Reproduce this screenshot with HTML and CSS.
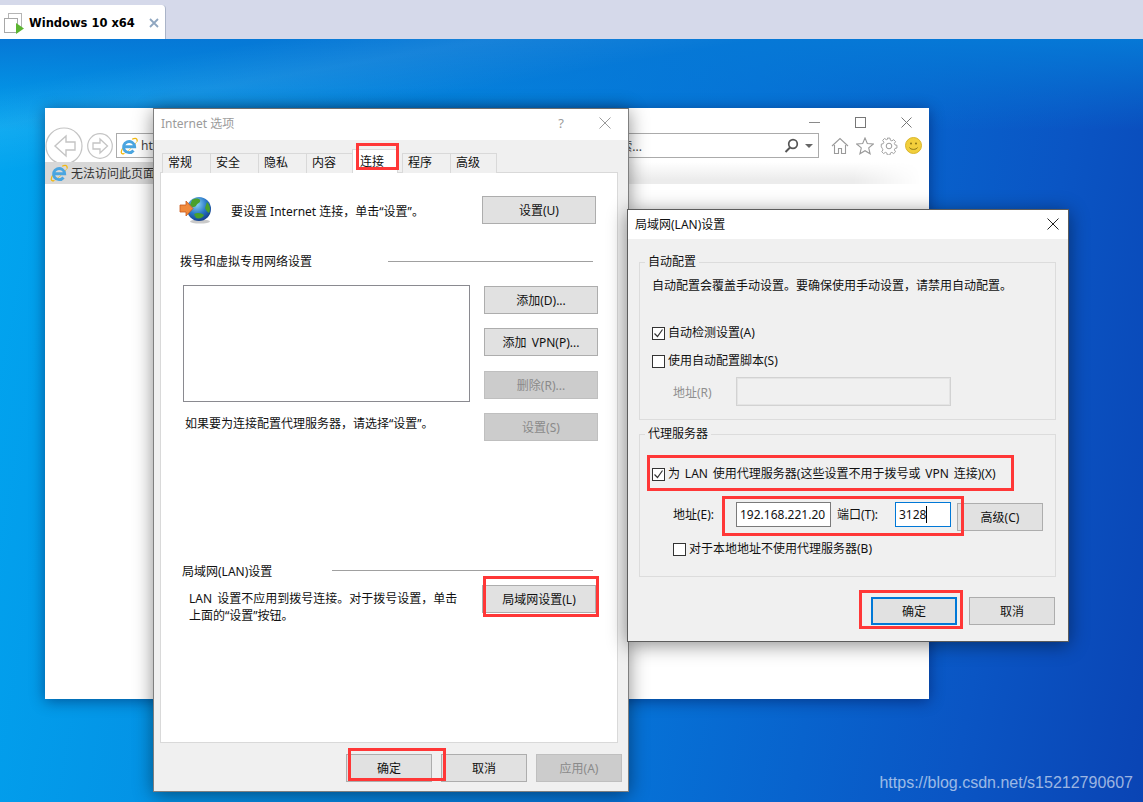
FILE: index.html
```html
<!DOCTYPE html>
<html lang="zh-CN">
<head>
    <meta charset="UTF-8">
    <title>Windows 10 x64</title>
    <link rel="stylesheet" href="styles.css">
</head>
<body>

    <svg class="defs" width="0" height="0">
        <defs>
            <symbol id="ie" viewBox="0 0 20 20">
                <path d="M3 12.500C.5 16.500 1 19.500 4.500 18.500M13.500 2.500c4-1.800 6-.8 5.500 2.500" fill="none" stroke="#f2b90f" stroke-width="1.400"/>
                <path d="M4.500 18.500C9 16 15.500 10 19 5" fill="none" stroke="#f2b90f" stroke-width=".7"/>
                <path d="M4.800 10.800h11.500A6.200 6.200 0 1 0 15 15" fill="none" stroke="#4aa5e0" stroke-width="3.200"/>
            </symbol>
            <radialGradient id="globeFill" cx="40%" cy="30%" r="75%">
                <stop offset="0" stop-color="#8fd6f5"/>
                <stop offset=".55" stop-color="#2a78c8"/>
                <stop offset="1" stop-color="#123a86"/>
            </radialGradient>
        </defs>
    </svg>

    <!-- Вкладка виртуальной машины -->
    <div class="tabstrip">
        <div class="vm-tab">
            <svg class="vm-icon" width="20" height="21" viewBox="0 0 20 21">
                <rect x="4.500" y=".5" width="13" height="14" fill="#fff" stroke="#b5b5b5"/>
                <rect x=".5" y="5.500" width="13" height="14" fill="#fff" stroke="#a8a8a8"/>
                <path d="M12 10l8 5.500-8 5.500z" fill="#5cb531"/>
            </svg>
            <span class="vm-name">Windows 10 x64</span>
            <svg class="vm-close" width="10" height="10" viewBox="0 0 10 10">
                <path d="M1 1l8 8M9 1l-8 8" stroke="#8fa6c0" stroke-width="1.800"/>
            </svg>
        </div>
    </div>

    <main class="desktop">

        <!-- Окно браузера -->
        <section class="ie-window">
            <div class="ie-caption">
                <svg width="11" height="11" viewBox="0 0 11 11"><path d="M0 5.500h11" stroke="#8a8a8a"/></svg>
                <svg width="11" height="11" viewBox="0 0 11 11"><rect x=".5" y=".5" width="10" height="10" fill="none" stroke="#777"/></svg>
                <svg width="11" height="11" viewBox="0 0 11 11"><path d="M.5.500l10 10M10.500.500l-10 10" stroke="#777"/></svg>
            </div>
            <div class="ie-toolbar">
                <svg class="ie-back" width="38" height="38" viewBox="0 0 38 38">
                    <circle cx="19" cy="19" r="18" fill="#fff" stroke="#c4c4c4" stroke-width="1.200"/>
                    <path d="M21 9L10 19l11 10v-6h9v-8h-9z" fill="#fff" stroke="#c4c4c4" stroke-width="1.400"/>
                </svg>
                <svg class="ie-forward" width="26" height="26" viewBox="0 0 26 26">
                    <circle cx="13" cy="13" r="12.300" fill="#fff" stroke="#c4c4c4" stroke-width="1.200"/>
                    <path d="M13 6l7.500 7-7.500 7v-4H6v-6h7z" fill="#fff" stroke="#c4c4c4" stroke-width="1.300"/>
                </svg>
                <div class="ie-address">
                    <svg class="ie-logo" width="18" height="18"><use href="#ie"/></svg>
                    <span class="ie-url">http://www.baidu.com/</span>
                    <span class="ie-search-text">搜索...</span>
                    <svg class="ie-lens" width="15" height="15" viewBox="0 0 15 15">
                        <circle cx="9" cy="6" r="4.300" fill="none" stroke="#555" stroke-width="1.700"/>
                        <path d="M6 9.500L1.500 14" stroke="#555" stroke-width="2"/>
                    </svg>
                    <span class="ie-drop"></span>
                </div>
                <div class="ie-tools">
                    <svg width="18" height="18" viewBox="0 0 18 18">
                        <path d="M1 9l8-7.500L17 9M3.500 8v8.500h4v-5h3v5h4V8" fill="none" stroke="#9a9a9a" stroke-width="1.100"/>
                    </svg>
                    <svg width="18" height="18" viewBox="0 0 18 18">
                        <path d="M9 1l2.300 5.500 6 .5-4.600 3.900 1.400 5.900L9 13.700l-5.100 3.100 1.400-5.900L.700 7l6-.5z" fill="#fff" stroke="#9a9a9a" stroke-width="1.100"/>
                    </svg>
                    <svg width="18" height="18" viewBox="0 0 18 18">
                        <circle cx="9" cy="9" r="2.800" fill="none" stroke="#9a9a9a"/>
                        <path d="M7.500 1h3l.4 2.300 1.600.7 2-1.300 2 2.100-1.300 2 .7 1.600 2.100.4v3l-2.100.4-.7 1.600 1.300 2-2 2-2-1.300-1.600.7-.4 2.100h-3l-.4-2.100-1.600-.7-2 1.300-2-2 1.300-2-.7-1.600L1 10.500v-3l2.100-.4.700-1.600-1.300-2 2-2.100 2 1.300 1.600-.7z" fill="none" stroke="#9a9a9a" transform="scale(.92) translate(.4 .2)"/>
                    </svg>
                    <svg width="17" height="17" viewBox="0 0 17 17">
                        <circle cx="8.500" cy="8.500" r="8" fill="#f2cf3c" stroke="#d9b52b"/>
                        <circle cx="6" cy="6.500" r="1" fill="#8a7414"/>
                        <circle cx="11" cy="6.500" r="1" fill="#8a7414"/>
                        <path d="M4.500 10.500c1 2.500 7 2.500 8 0" fill="none" stroke="#8a7414"/>
                    </svg>
                </div>
            </div>
            <div class="ie-tabrow">
                <div class="ie-tab">
                    <svg width="18" height="18"><use href="#ie"/></svg>
                    <span>无法访问此页面</span>
                </div>
                <div class="ie-tabfade"></div>
            </div>
        </section>

        <!-- Диалог свойств браузера -->
        <section class="dialog options">
            <header class="dialog-title faded">
                <span>Internet 选项</span>
                <div class="title-actions">
                    <span class="help">?</span>
                    <svg width="12" height="12" viewBox="0 0 12 12"><path d="M.5.500l11 11M11.500.500l-11 11" stroke="#9a9a9a"/></svg>
                </div>
            </header>
            <nav class="tabs">
                <span class="tab">常规</span>
                <span class="tab">安全</span>
                <span class="tab">隐私</span>
                <span class="tab">内容</span>
                <span class="tab active">连接</span>
                <span class="tab">程序</span>
                <span class="tab">高级</span>
            </nav>
            <div class="panel">
                <div class="setup-row">
                    <svg class="globe" width="33" height="28" viewBox="0 0 33 28">
                        <ellipse cx="21" cy="25.500" rx="10" ry="2" fill="#c9c9c9"/>
                        <circle cx="20" cy="13" r="12" fill="url(#globeFill)"/>
                        <path d="M13 4c3-2 7-2 8 0 1 3-3 3-4 6-2 2-5 1-6-1zM28 6c3 3 4 8 2 11-2-1-3-3-4-5zM15 18c3-2 8-1 10 1-1 3-5 4-8 3z" fill="#4aa02c"/>
                        <path d="M1 9h6V5l7 7.500L7 20v-4H1z" fill="#f08a3c" stroke="#c9591a" stroke-width=".8"/>
                    </svg>
                    <span class="setup-text">要设置 Internet 连接，单击“设置”。</span>
                    <button class="btn wide">设置(U)</button>
                </div>

                <div class="section-head vpn-head">
                    <span class="vpn-title">拨号和虚拟专用网络设置</span>
                    <i class="rule"></i>
                </div>
                <div class="vpn-area">
                    <div class="vpn-left">
                        <div class="listbox"></div>
                        <p class="vpn-note">如果要为连接配置代理服务器，请选择“设置”。</p>
                    </div>
                    <div class="vpn-buttons">
                        <button class="btn wide">添加(D)...</button>
                        <button class="btn wide">添加 VPN(P)...</button>
                        <button class="btn wide off">删除(R)...</button>
                        <button class="btn wide off">设置(S)</button>
                    </div>
                </div>

                <div class="section-head lan-head">
                    <span class="lan-title">局域网(LAN)设置</span>
                    <i class="rule"></i>
                </div>
                <div class="lan-row">
                    <p class="lan-note">LAN 设置不应用到拨号连接。对于拨号设置，单击<br>上面的“设置”按钮。</p>
                    <button class="btn wide">局域网设置(L)</button>
                </div>
            </div>
            <footer class="dialog-buttons">
                <button class="btn">确定</button>
                <button class="btn">取消</button>
                <button class="btn off">应用(A)</button>
            </footer>
        </section>

        <!-- Диалог настроек LAN -->
        <section class="dialog lan">
            <header class="dialog-title">
                <span>局域网(LAN)设置</span>
                <svg width="12" height="12" viewBox="0 0 12 12"><path d="M.5.500l11 11M11.500.500l-11 11" stroke="#222"/></svg>
            </header>
            <div class="lan-body">
                <fieldset class="group auto-group">
                    <legend>自动配置</legend>
                    <p class="auto-note">自动配置会覆盖手动设置。要确保使用手动设置，请禁用自动配置。</p>
                    <label class="check-row first-check">
                        <span class="check">
                            <svg width="11" height="11" viewBox="0 0 11 11"><path d="M1.500 5.500l3 3 5-7" fill="none" stroke="#333" stroke-width="1.200"/></svg>
                        </span>
                        自动检测设置(A)
                    </label>
                    <label class="check-row second-check"><span class="check"></span>使用自动配置脚本(S)</label>
                    <div class="field-row script-row">
                        <span class="field-label muted">地址(R)</span>
                        <div class="field disabled"></div>
                    </div>
                </fieldset>
                <fieldset class="group proxy-group">
                    <legend>代理服务器</legend>
                    <label class="check-row proxy-check">
                        <span class="check">
                            <svg width="11" height="11" viewBox="0 0 11 11"><path d="M1.500 5.500l3 3 5-7" fill="none" stroke="#333" stroke-width="1.200"/></svg>
                        </span>
                        为 LAN 使用代理服务器(这些设置不用于拨号或 VPN 连接)(X)
                    </label>
                    <div class="field-row proxy-row">
                        <span class="field-label">地址(E):</span>
                        <div class="field addr">192.168.221.20</div>
                        <span class="port-label">端口(T):</span>
                        <div class="field port">3128<i class="caret"></i></div>
                        <button class="btn adv">高级(C)</button>
                    </div>
                    <label class="check-row local-check"><span class="check"></span>对于本地地址不使用代理服务器(B)</label>
                </fieldset>
                <div class="lan-buttons">
                    <button class="btn default">确定</button>
                    <button class="btn">取消</button>
                </div>
            </div>
        </section>

        <!-- Красные рамки поверх окон -->
        <i class="mark mark-tab"></i>
        <i class="mark mark-lanbtn"></i>
        <i class="mark mark-ok"></i>
        <i class="mark mark-proxy"></i>
        <i class="mark mark-addr"></i>
        <i class="mark mark-lanok"></i>

        <span class="watermark">https://blog.csdn.net/s15212790607</span>
    </main>

</body>
</html>
```

FILE: styles.css
```css
* {
    box-sizing: border-box;
}

body {
    margin: 0;
    width: 1143px;
    height: 802px;
    overflow: hidden;
    font-family: "Noto Sans", "Noto Sans CJK SC", sans-serif;
    font-size: 12px;
    color: #111;
}

p {
    margin: 0;
}

.defs {
    position: absolute;
}

/* Верхняя полоса с вкладкой */
.tabstrip {
    height: 39px;
    background-color: #d5d9ea;
    padding-top: 5px;
}

.vm-tab {
    width: 166px;
    height: 34px;
    background-color: #fff;
    border-top-right-radius: 4px;
    border-right: 1px solid #aab4c8;
    display: flex;
    align-items: center;
    padding-left: 4px;
}

.vm-icon {
    flex: none;
    margin-top: 2px;
}

.vm-name {
    font-family: "DejaVu Sans", sans-serif;
    font-weight: bold;
    font-size: 11.500px;
    color: #000;
    margin: 2px 0 0 5px;
    white-space: nowrap;
}

.vm-close {
    margin: 1px 0 0 14px;
    flex: none;
}

/* Рабочий стол */
.desktop {
    position: relative;
    height: 763px;
    overflow: hidden;
    background:
        linear-gradient(170deg, rgba(255, 255, 255, 0) 5%, rgba(255, 255, 255, 0.07) 9%, rgba(255, 255, 255, 0) 14%),
        linear-gradient(180deg, #0678d6 0, rgba(6, 120, 214, 0) 12%),
        linear-gradient(100deg, #01a6f0 0, #0490e4 25%, #0671d6 60%, #0a55c4 85%, #0a44b4 100%);
}

.ie-window {
    position: absolute;
    left: 45px;
    top: 69px;
    width: 884px;
    height: 591px;
    background-color: #fff;
    box-shadow: 0 2px 14px rgba(0, 0, 50, 0.45);
}

.ie-caption {
    height: 24px;
    display: flex;
    justify-content: flex-end;
    align-items: center;
    gap: 35px;
    padding: 4px 17px 0 0;
}

.ie-toolbar {
    height: 27px;
    display: flex;
    align-items: center;
}

.ie-back {
    flex: none;
}

.ie-forward {
    margin-left: 4px;
    flex: none;
}

.ie-address {
    margin-left: 3px;
    width: 703px;
    height: 25px;
    border: 1px solid #ababab;
    display: flex;
    align-items: center;
    padding: 0 5px 0 3px;
    font-size: 12px;
    color: #444;
}

.ie-logo {
    flex: none;
}

.ie-url {
    margin-left: 3px;
}

.ie-search-text {
    margin-left: auto;
    margin-right: 142px;
}

.ie-lens {
    flex: none;
}

.ie-drop {
    margin-left: 6px;
    border-left: 4px solid transparent;
    border-right: 4px solid transparent;
    border-top: 4px solid #666;
}

.ie-tools {
    display: flex;
    align-items: center;
    gap: 6.700px;
    margin-left: 12px;
}

.ie-tabrow {
    height: 22px;
    margin-top: 3px;
    display: flex;
    position: relative;
}

.ie-tab {
    width: 200px;
    background-color: #d8d8d8;
    display: flex;
    align-items: center;
    gap: 3px;
    padding-left: 5px;
    color: #333;
    flex: none;
}

.ie-tabfade {
    width: 676px;
    background: linear-gradient(to bottom, #fff, #ececec 80%);
    -webkit-mask-image: linear-gradient(to right, #000 90%, transparent);
}

/* Общие стили диалогов */
.dialog {
    position: absolute;
    background-color: #f0f0f0;
    box-shadow: 0 3px 18px rgba(0, 0, 0, 0.45);
    border: 1px solid #6d6d6d;
    display: flex;
    flex-direction: column;
}

.dialog-title {
    background-color: #fff;
    display: flex;
    justify-content: space-between;
    align-items: center;
    flex: none;
}

.dialog-title.faded {
    color: #9b9b9b;
}

.btn {
    font: inherit;
    color: #111;
    width: 86px;
    height: 28px;
    padding: 0;
    background-color: #e1e1e1;
    border: 1px solid #adadad;
    border-radius: 0;
    white-space: nowrap;
    word-spacing: 2px;
    flex: none;
}

.btn.wide {
    width: 114px;
}

.btn.off {
    background-color: #cccccc;
    border-color: #bfbfbf;
    color: #8a8a8a;
}

/* Internet 选项 */
.options {
    left: 153px;
    top: 69px;
    width: 476px;
    height: 684px;
    border-color: #7f7f7f;
    border-top-color: #6d6d6d;
}

.options .dialog-title {
    height: 31px;
    padding: 0 17px 3px 7px;
}

.title-actions {
    display: flex;
    align-items: center;
    gap: 35px;
}

.help {
    font-size: 13px;
}

.tabs {
    height: 33px;
    display: flex;
    align-items: flex-end;
    padding-left: 8px;
    position: relative;
    margin-bottom: -1px;
}

.tab {
    width: 49px;
    height: 20px;
    background-color: #f0f0f0;
    border: 1px solid #d9d9d9;
    border-bottom: none;
    margin-right: -1px;
    padding-left: 5px;
    line-height: 17px;
}

.tab:last-child {
    width: 47px;
}

.tab.active {
    width: 46px;
    height: 24px;
    background-color: #fff;
    padding-left: 7px;
    line-height: 24px;
    margin: 0 4px 0 -2px;
    position: relative;
}

.panel {
    margin: 0 10px 0 6px;
    height: 571px;
    background-color: #fff;
    border: 1px solid #d9d9d9;
    flex: none;
}

.setup-row {
    display: flex;
    align-items: center;
    margin-top: 23px;
    padding: 0 21px 0 18px;
    height: 28px;
}

.globe {
    flex: none;
}

.setup-text {
    margin: 2px 0 0 19px;
}

.setup-row .btn {
    margin-left: auto;
}

.section-head {
    display: flex;
    align-items: center;
    height: 16px;
}

.rule {
    height: 1px;
    background-color: #a0a0a0;
}

.vpn-head {
    margin-top: 29px;
    padding-left: 19px;
}

.vpn-head .rule {
    margin-left: 76px;
    width: 205px;
}

.vpn-area {
    display: flex;
    margin-top: 16px;
    padding-left: 22px;
}

.listbox {
    width: 287px;
    height: 117px;
    background-color: #fff;
    border: 1px solid #8a8a90;
}

.vpn-note {
    margin: 14px 0 0 2px;
    line-height: 16px;
}

.vpn-buttons {
    display: flex;
    flex-direction: column;
    gap: 14.300px;
    margin: 1px 0 0 14px;
}

.lan-head {
    margin-top: 122px;
    padding-left: 21px;
}

.lan-head .rule {
    margin-left: 60px;
    width: 261px;
}

.lan-row {
    display: flex;
    margin-top: 6px;
    padding: 0 21px 0 28px;
}

.lan-note {
    line-height: 17px;
    margin-top: 5px;
    word-spacing: 2px;
}

.lan-row .btn {
    margin-left: auto;
}

.dialog-buttons {
    display: flex;
    justify-content: flex-end;
    gap: 9px;
    margin-top: 11px;
    padding-right: 6px;
}

/* 局域网设置 */
.lan {
    left: 627px;
    top: 170px;
    width: 442px;
    height: 433px;
    border-color: #5c5c5c;
}

.lan .dialog-title {
    height: 29px;
    padding: 0 9px 2px 7px;
}

.lan-body {
    padding: 0 12px 0 11px;
}

.group {
    margin: 0;
    padding: 0;
    border: 1px solid #dcdcdc;
    min-width: 0;
    width: 417px;
}

.group legend {
    margin-left: 5px;
    padding: 0 3px;
    line-height: 16px;
}

.auto-group {
    margin-top: 15px;
    height: 166px;
}

.proxy-group {
    margin-top: 6px;
    height: 151px;
}

.auto-note {
    margin: 8px 0 0 12px;
    line-height: 16px;
}

.check-row {
    display: flex;
    align-items: center;
    line-height: 16px;
    padding-left: 12px;
}

.check {
    width: 13px;
    height: 13px;
    border: 1px solid #333;
    background-color: #fff;
    margin-right: 3px;
    display: flex;
    align-items: center;
    justify-content: center;
    flex: none;
}

.first-check {
    margin-top: 31px;
}

.second-check {
    margin-top: 12px;
}

.proxy-check {
    margin-top: 24px;
    word-spacing: 1.750px;
}

.local-check {
    margin-top: 10px;
    padding-left: 33px;
}

.field-row {
    display: flex;
    align-items: center;
    padding-left: 33px;
}

.field-label {
    width: 63px;
    flex: none;
}

.muted {
    color: #8f8f8f;
}

.field {
    height: 25px;
    background-color: #fff;
    border: 1px solid #7a7a7a;
    line-height: 23px;
    padding-left: 3px;
    flex: none;
}

.field.disabled {
    width: 215px;
    height: 29px;
    background-color: #f0f0f0;
    border: 2px solid #e4e4e4;
    outline: 1px solid #d2d2d2;
    outline-offset: -1px;
}

.script-row {
    margin-top: 8px;
}

.proxy-row {
    margin-top: 20px;
    height: 29px;
    align-items: flex-start;
}

.proxy-row .field-label {
    line-height: 25px;
}

.addr {
    width: 95px;
    white-space: nowrap;
    overflow: hidden;
}

.port-label {
    width: 58px;
    margin-left: 6px;
    line-height: 25px;
    flex: none;
}

.port {
    width: 56px;
    border-color: #0078d7;
}

.caret {
    display: inline-block;
    width: 1px;
    height: 17px;
    background-color: #000;
    vertical-align: -4px;
}

.adv {
    margin: 1px 0 0 6px;
}

.lan-buttons {
    display: flex;
    justify-content: flex-end;
    gap: 12px;
    margin-top: 20px;
    padding-right: 1px;
}

.btn.default {
    border: 2px solid #0078d7;
}

/* Красные рамки */
.mark {
    position: absolute;
    z-index: 5;
    border: 3px solid #ff3737;
    pointer-events: none;
}

.mark-tab {
    left: 356px;
    top: 104px;
    width: 43px;
    height: 27px;
}

.mark-lanbtn {
    left: 483px;
    top: 537px;
    width: 116px;
    height: 41px;
}

.mark-ok {
    left: 348px;
    top: 709px;
    width: 98px;
    height: 33px;
}

.mark-proxy {
    left: 647px;
    top: 416px;
    width: 367px;
    height: 36px;
}

.mark-addr {
    left: 722px;
    top: 457px;
    width: 242px;
    height: 40px;
}

.mark-lanok {
    left: 859px;
    top: 551px;
    width: 104px;
    height: 39px;
}

.watermark {
    position: absolute;
    right: 10px;
    bottom: 10px;
    font-family: "Liberation Sans", Arial, sans-serif;
    font-size: 16px;
    color: rgba(255, 255, 255, 0.6);
}
```
